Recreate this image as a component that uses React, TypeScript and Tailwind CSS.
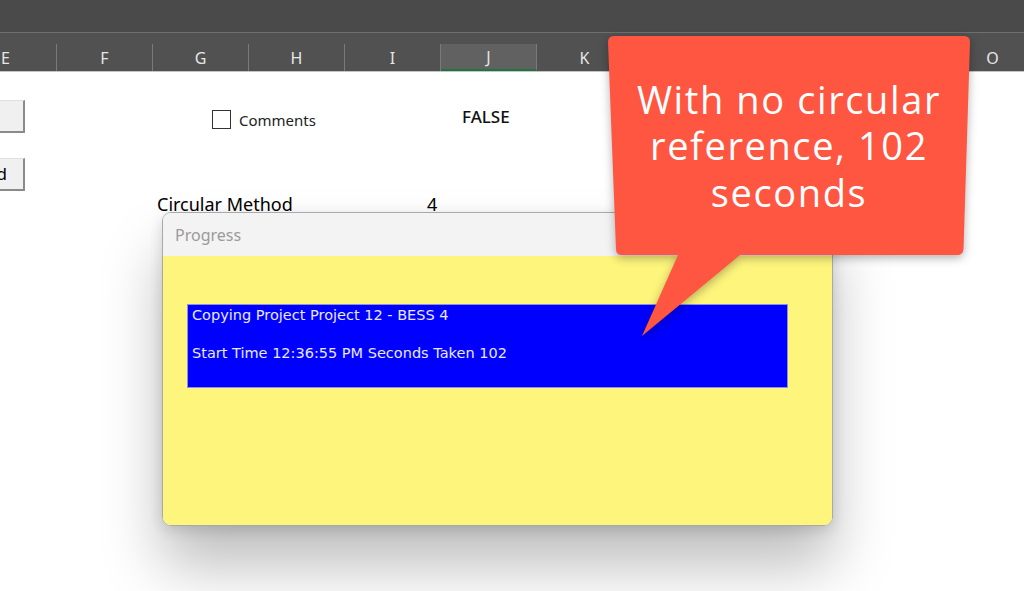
import React from "react";

const columns: { label: string; width: number; selected?: boolean }[] = [
  { label: "E", width: 57 },
  { label: "F", width: 96 },
  { label: "G", width: 96 },
  { label: "H", width: 96 },
  { label: "I", width: 96 },
  { label: "J", width: 96, selected: true },
  { label: "K", width: 96 },
  { label: "L", width: 96 },
  { label: "M", width: 96 },
  { label: "N", width: 120 },
  { label: "O", width: 96 },
];

function ColumnHeader() {
  return (
    <div className="flex h-[39px] border-b border-[#c4c4c4] bg-[#515151]">
      {columns.map((c, i) => (
        <div
          key={c.label}
          style={{ width: c.width }}
          className="flex h-full shrink-0 items-end"
        >
          <div
            className={
              "flex h-[27px] w-full items-center border-r border-[#7a7a7a] text-[16px] text-[#e6e6e6] " +
              (i === 0 ? "justify-start pl-[1px] " : "justify-center ") +
              (c.selected ? "border-b-2 border-b-[#217346] bg-[#616161] " : "")
            }
          >
            {c.label}
          </div>
        </div>
      ))}
    </div>
  );
}

function SheetButton({ label }: { label?: string }) {
  return (
    <div className="flex h-[33px] w-[25px] items-center justify-end border-t border-t-[#e0e0e0] border-r-2 border-b-2 border-r-[#8a8a8a] border-b-[#8a8a8a] bg-[#f0f0f0] pr-[16px] text-[17px] text-black">
      {label}
    </div>
  );
}

function Sheet() {
  return (
    <div className="flex flex-col bg-white pt-[28px] font-['Noto_Sans',sans-serif]">
      <div className="flex h-[33px] items-center">
        <SheetButton />
        <div className="ml-[187px] mt-[6px] h-[19px] w-[19px] border border-[#333]" />
        <span className="ml-[8px] mt-[7px] w-[223px] text-[15px] text-[#222]">Comments</span>
        <span className="text-[17px] font-medium text-[#111]">FALSE</span>
      </div>
      <div className="mt-[25px] flex h-[33px] items-center">
        <SheetButton label="d" />
      </div>
      <div className="mt-[1px] flex h-[24px] items-center">
        <span className="ml-[157px] w-[270px] text-[18px] leading-none text-black">Circular Method</span>
        <span className="text-[18px] leading-none text-black">4</span>
      </div>
    </div>
  );
}

function ProgressDialog() {
  return (
    <div className="absolute left-[162px] top-[212px] flex h-[314px] w-[671px] flex-col overflow-hidden rounded-[9px] border border-[#a9a9a9] shadow-[0_40px_60px_rgba(0,0,0,0.26),0_4px_14px_rgba(0,0,0,0.14)]">
      <div className="flex h-[43px] items-center bg-[#f3f3f3] pl-[12px] font-['Noto_Sans',sans-serif] text-[16px] text-[#9b9b9b]">
        Progress
      </div>
      <div className="flex flex-1 flex-col bg-[#fef57c] pl-[24px] pt-[48px]">
        <div className="flex h-[84px] w-[601px] flex-col border border-[#8f8fe0] bg-[#0000ff] pl-[4px] pt-[1px] font-['DejaVu_Sans',sans-serif] text-[14.5px] leading-[19px] text-[#e8e8ff]">
          <span>Copying Project Project 12 - BESS 4</span>
          <span className="mt-[19px]">Start Time 12:36:55 PM Seconds Taken 102</span>
        </div>
      </div>
    </div>
  );
}

function Callout() {
  return (
    <>
      <svg
        className="pointer-events-none absolute inset-0 h-[591px] w-[1024px] drop-shadow-[0_3px_5px_rgba(0,0,0,0.3)]"
        viewBox="0 0 1024 591"
      >
        <path
          d="M614 36 L964 36 Q970 36 970 42 L963.5 249 Q963 255 957 255 L740 255 L642 336 L678 255 L622 255 Q616 255 616 249 L608 42 Q608 36 614 36 Z"
          fill="#fe5641"
        />
      </svg>
      <div className="absolute left-[608px] top-[36px] flex h-[219px] w-[362px] flex-col items-center justify-center text-center font-['Open_Sans',sans-serif] text-[38px] font-medium leading-[46.5px] tracking-[1.6px] text-white">
        <span>With no circular</span>
        <span>reference, 102</span>
        <span>seconds</span>
      </div>
    </>
  );
}

export default function App() {
  return (
    <div className="relative h-[591px] w-[1024px] overflow-hidden bg-white font-['Noto_Sans',sans-serif]">
      <div className="h-[33px] border-b border-[#6f6f6f] bg-[#4a4a4a]" />
      <ColumnHeader />
      <Sheet />
      <ProgressDialog />
      <Callout />
    </div>
  );
}
